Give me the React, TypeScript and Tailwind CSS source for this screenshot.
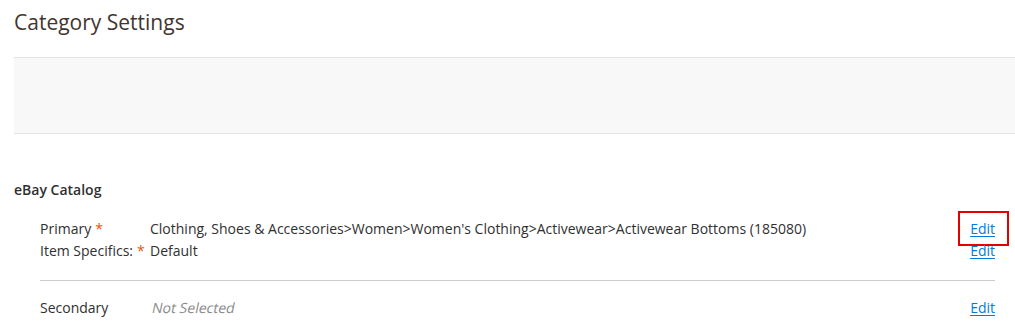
const font = { fontFamily: '"Open Sans", "Liberation Sans", sans-serif' };

function EditLink({ boxed = false }: { boxed?: boolean }) {
  return (
    <span className="relative inline-block">
      <a href="#" className="text-[#007bdb] underline underline-offset-2">
        Edit
      </a>
      {boxed && (
        <span className="absolute -left-[12px] -right-[14px] -top-[7px] -bottom-[6px] border-2 border-[#e50000]" />
      )}
    </span>
  );
}

function Required() {
  return <span className="ml-1 text-[#eb5202]">*</span>;
}

export default function App() {
  return (
    <div className="bg-white pl-[14px] text-[14px] text-[#303030]" style={font}>
      {/* Title */}
      <h1 className="pt-[7px] text-[21px] leading-[30px] font-normal text-[#41362f]">
        Category Settings
      </h1>

      {/* Empty panel */}
      <div className="mt-[20px] h-[77px] border-y border-[#e3e3e3] bg-[#f8f8f8]" />

      {/* eBay Catalog */}
      <h2 className="mt-[46px] text-[14px] leading-[20px] font-semibold">eBay Catalog</h2>

      <div className="mt-[18px] pl-[26px] pr-[20px]">
        <div className="flex items-center leading-[22px]">
          <div className="w-[110px] shrink-0">
            Primary
            <Required />
          </div>
          <div className="flex-1">
            Clothing, Shoes &amp; Accessories&gt;Women&gt;Women's Clothing&gt;Activewear&gt;Activewear Bottoms (185080)
          </div>
          <EditLink boxed />
        </div>
        <div className="flex items-center leading-[22px]">
          <div className="w-[110px] shrink-0">
            Item Specifics:
            <Required />
          </div>
          <div className="flex-1">Default</div>
          <EditLink />
        </div>

        <div className="mt-[18px] border-t border-[#cccccc]" />

        <div className="mt-[16px] flex items-center leading-[22px]">
          <div className="w-[110px] shrink-0">Secondary</div>
          <div className="flex-1 text-[#8a8a8a]">
            <span className="inline-block -skew-x-12 origin-bottom-left">Not Selected</span>
          </div>
          <EditLink />
        </div>
      </div>
    </div>
  );
}
